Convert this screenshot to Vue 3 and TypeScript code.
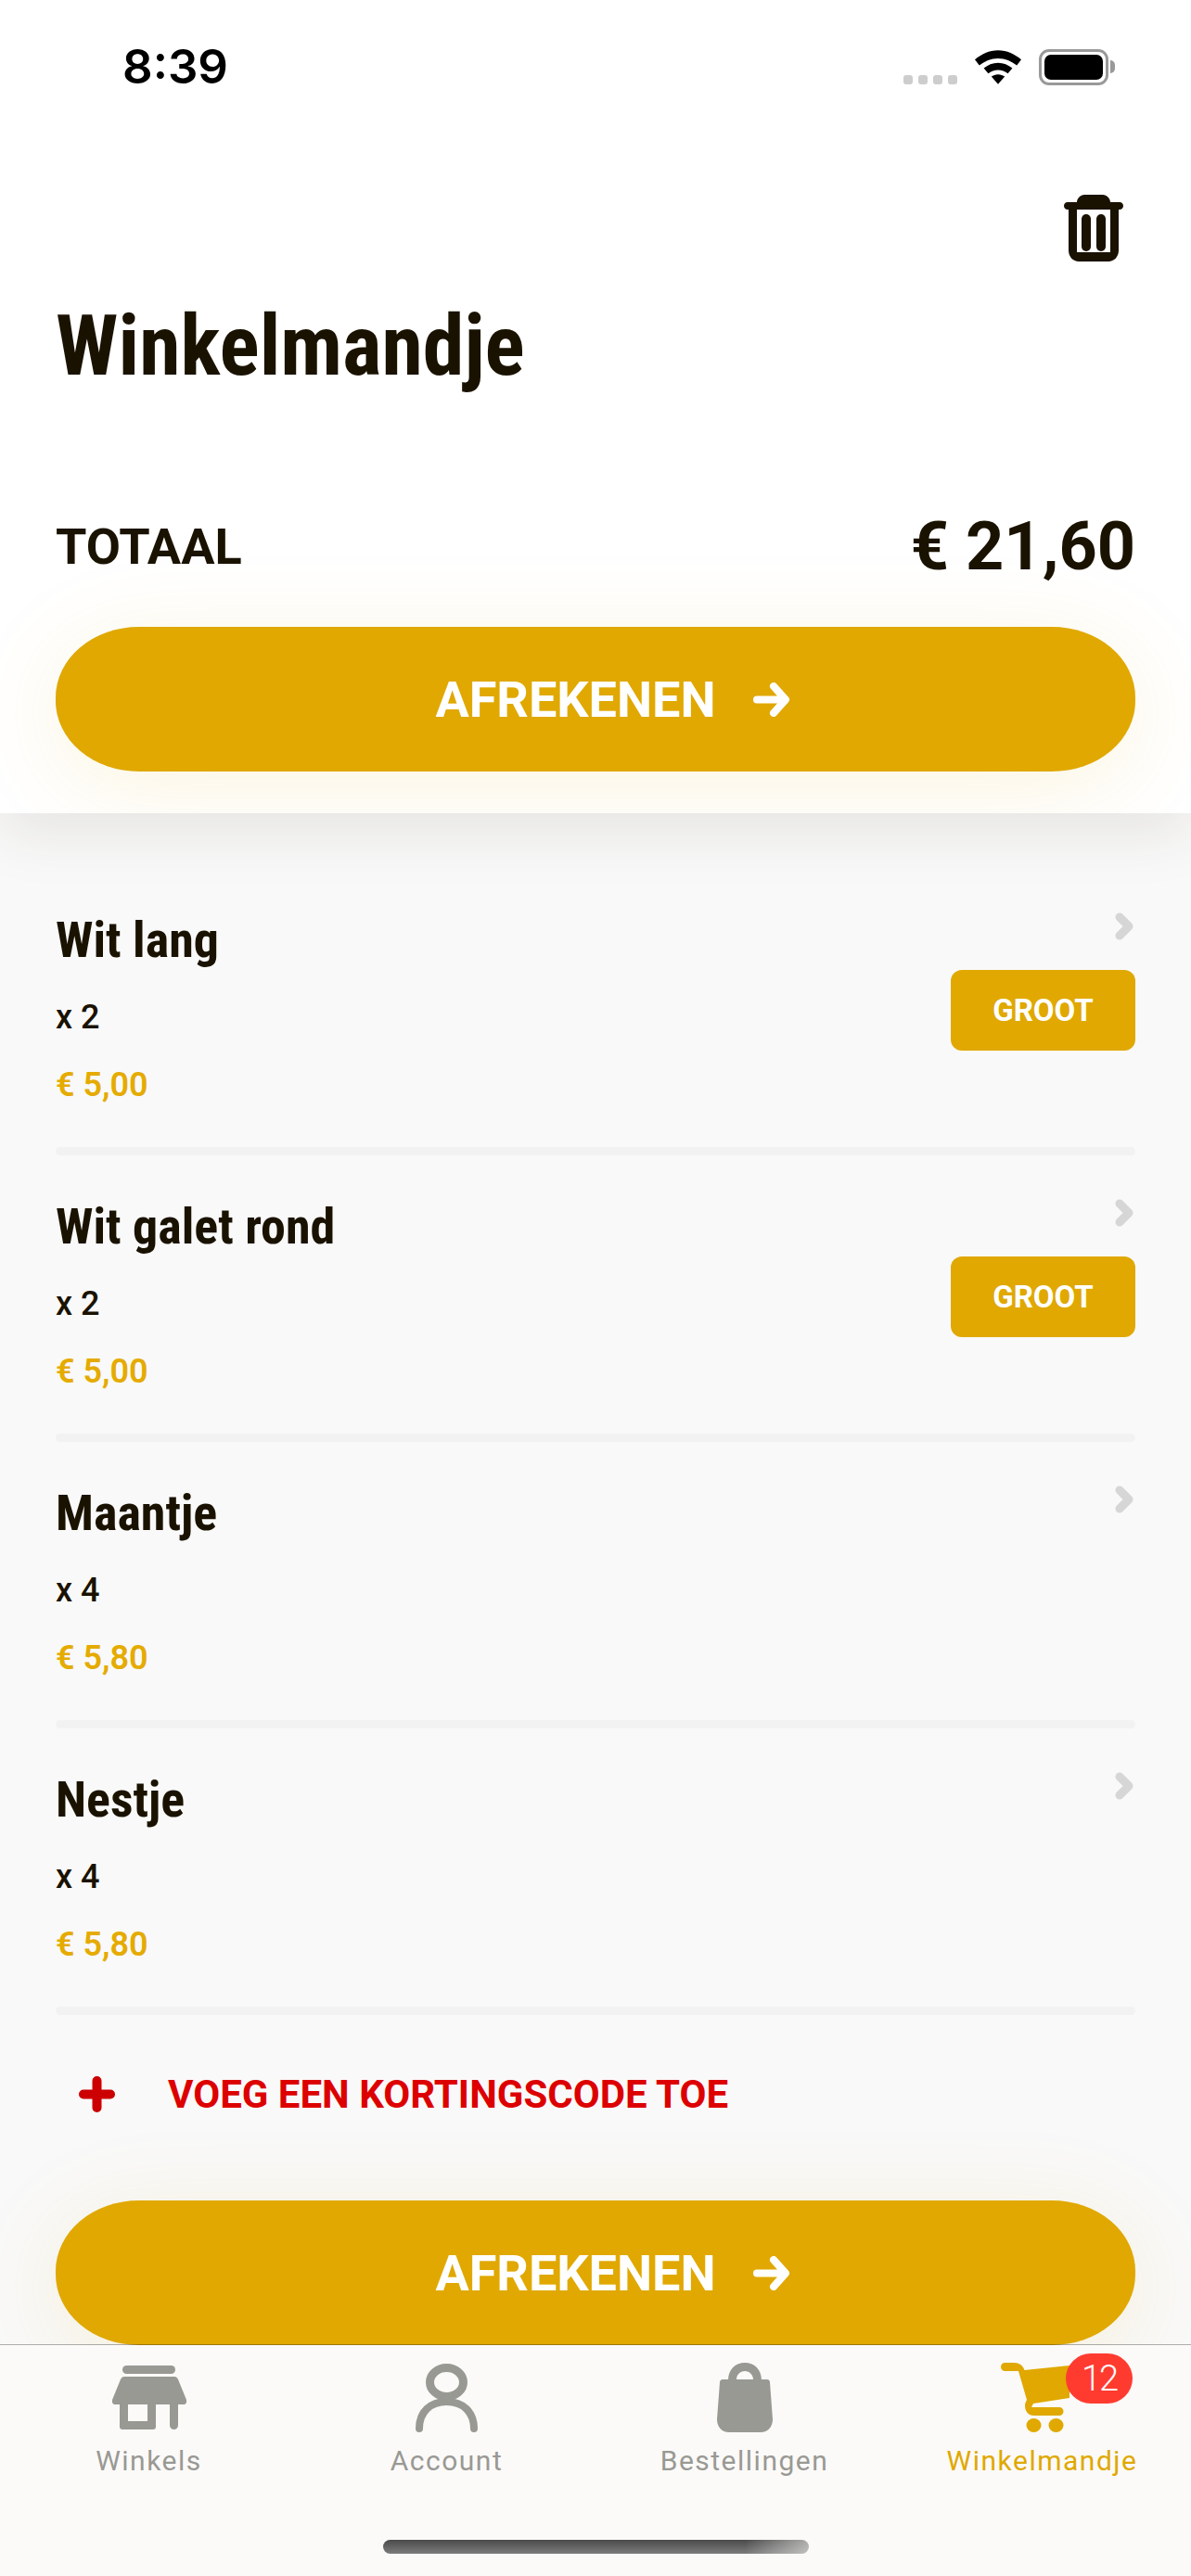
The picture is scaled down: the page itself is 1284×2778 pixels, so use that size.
<script setup lang="ts">
interface CartItem {
  name: string;
  qty: string;
  price: string;
  size?: string;
}

const items: CartItem[] = [
  { name: 'Wit lang', qty: 'x 2', price: '€ 5,00', size: 'GROOT' },
  { name: 'Wit galet rond', qty: 'x 2', price: '€ 5,00', size: 'GROOT' },
  { name: 'Maantje', qty: 'x 4', price: '€ 5,80' },
  { name: 'Nestje', qty: 'x 4', price: '€ 5,80' }
];
</script>

<template>
  <div class="screen">
    <header class="head">
      <div class="status">
        <span class="time">8:39</span>
        <div class="status-icons">
          <div class="signal"><i /><i /><i /><i /></div>
          <svg class="wifi" width="50" height="37" viewBox="0 0 52 38">
            <path d="M26 0C16 0 7.500 4 0 10.500L5 17C11 12 18 9 26 9s15 3 21 8l5-6.500C44.500 4 36 0 26 0z" fill="#000" />
            <path d="M26 14c-6 0-11.500 2.500-16 6l5 6c3-2.500 7-4 11-4s8 1.500 11 4l5-6c-4.500-3.500-10-6-16-6z" fill="#000" />
            <path d="M26 27c-3 0-5.500 1-7.500 2.500L26 38l7.500-8.500C31.500 28 29 27 26 27z" fill="#000" />
          </svg>
          <div class="battery"><div class="battery-fill" /><div class="battery-cap" /></div>
        </div>
      </div>
      <div class="trash-row">
        <svg width="64" height="72" viewBox="0 0 64 72" fill="#1a1200">
          <path d="M14 8c0-4 4-8 8-8h20c4 0 8 4 8 8h10c2.500 0 4 2 4 4s-1.500 4-4 4H4c-2.500 0-4-2-4-4s1.500-4 4-4z" />
          <path fill-rule="evenodd" d="M5 14h54v46c0 7-5 12-11 12H16C10 72 5 67 5 60zM14 16v46h36V16z" />
          <rect x="19" y="21" width="10" height="40" rx="5" />
          <rect x="35" y="21" width="10" height="40" rx="5" />
        </svg>
      </div>
      <h1 class="title">Winkelmandje</h1>
      <div class="total-row">
        <span class="total-label">TOTAAL</span>
        <span class="total-value">€ 21,60</span>
      </div>
      <button class="checkout checkout-top">
        <span>AFREKENEN</span>
        <svg width="41" height="37" viewBox="0 0 41 37" fill="none" stroke="#fff" stroke-width="8" stroke-linecap="round" stroke-linejoin="round">
          <path d="M4 18.500h30M22 4l13 14.500L22 33" />
        </svg>
      </button>
    </header>

    <main class="body">
      <template v-for="item in items" :key="item.name">
        <section class="item">
          <div class="item-main">
            <h2 class="item-name">{{ item.name }}</h2>
            <div class="item-qty">{{ item.qty }}</div>
            <div class="item-price">{{ item.price }}</div>
          </div>
          <div class="item-side">
            <svg class="chevron" width="20" height="30" viewBox="0 0 20 30" fill="none" stroke="#d6d6d6" stroke-width="9" stroke-linecap="round" stroke-linejoin="round">
              <path d="M5 5l10 10L5 25" />
            </svg>
            <span v-if="item.size" class="size">{{ item.size }}</span>
          </div>
        </section>
        <div class="rule" />
      </template>

      <div class="coupon">
        <svg width="39" height="39" viewBox="0 0 39 39" fill="none" stroke="#cc0000" stroke-width="10" stroke-linecap="round">
          <path d="M19.500 5v29M5 19.500h29" />
        </svg>
        <span>VOEG EEN KORTINGSCODE TOE</span>
      </div>

      <button class="checkout checkout-bottom">
        <span>AFREKENEN</span>
        <svg width="41" height="37" viewBox="0 0 41 37" fill="none" stroke="#fff" stroke-width="8" stroke-linecap="round" stroke-linejoin="round">
          <path d="M4 18.500h30M22 4l13 14.500L22 33" />
        </svg>
      </button>
    </main>

    <nav class="tabs">
      <div class="tab">
        <div class="tab-icon">
          <svg width="80" height="69" viewBox="0 0 80 69" fill="#999994">
            <rect x="11" y="0" width="57" height="9" rx="4.500" />
            <path d="M13 12h54c2 0 3 1 4 3l9 22c1 3-1 5-3 5H3c-2 0-4-2-3-5l9-22c1-2 2-3 4-3z" />
            <path fill-rule="evenodd" d="M8 42h39v24c0 2-1 3-3 3H11c-2 0-3-1-3-3zM17 42v18h21V42z" />
            <path d="M62 42h9v22.500a4.500 4.500 0 0 1-9 0z" />
          </svg>
        </div>
        <span>Winkels</span>
      </div>
      <div class="tab">
        <div class="tab-icon">
          <svg width="67" height="74" viewBox="0 0 67 74" fill="none" stroke="#999994" stroke-linecap="round">
            <ellipse cx="33.500" cy="20" rx="18" ry="15.500" stroke-width="9" />
            <path d="M4 70C4 52 16 41 33.500 41S63 52 63 70" stroke-width="8" />
          </svg>
        </div>
        <span>Account</span>
      </div>
      <div class="tab">
        <div class="tab-icon">
          <svg width="60" height="75" viewBox="0 0 60 75" fill="#999994">
            <path fill-rule="evenodd" d="M12 19C12 7 20 0 30 0s18 7 18 19zM21 18h18c0-5-4-9-9-9s-9 4-9 9z" />
            <path d="M6 18h48c2 0 3 1.500 3 3l3 40c0 8-5 14-13 14H13C5 75 0 69 0 61L3 21c0-1.500 1-3 3-3z" />
          </svg>
        </div>
        <span>Bestellingen</span>
      </div>
      <div class="tab tab-active">
        <div class="tab-icon cart-wrap">
          <svg width="82" height="75" viewBox="0 0 82 75" fill="#e0a800">
            <path d="M4.500 0H14c6 0 10 3 11.500 8L74 3v35l-39 6-2 4h30a4.500 4.500 0 0 1 0 9H36c-7 0-10-5-10-11 0-2 1-4 2-6L19 9H4.500a4.500 4.500 0 0 1 0-9z" />
            <ellipse cx="35.500" cy="67.500" rx="8" ry="7.500" />
            <ellipse cx="59.500" cy="67.500" rx="8" ry="7.500" />
          </svg>
          <span class="badge">12</span>
        </div>
        <span>Winkelmandje</span>
      </div>
    </nav>
    <div class="home-bar" />
  </div>
</template>

<style>
html, body {
  margin: 0;
  background: #f9f9f9;
}
</style>

<style scoped>
.screen {
  position: relative;
  width: 1284px;
  height: 2778px;
  overflow: hidden;
  background: #f9f9f9;
  font-family: Roboto, "Liberation Sans", sans-serif;
  color: #1a1200;
}

.head {
  position: relative;
  z-index: 1;
  box-sizing: border-box;
  height: 877px;
  padding: 0 60px;
  background: #fff;
  box-shadow: 0 20px 60px rgba(60, 50, 20, 0.1);
  overflow: hidden;
}

.status {
  display: flex;
  justify-content: space-between;
  align-items: flex-start;
  box-sizing: border-box;
  height: 210px;
  margin: 0 29px 0 72px;
  padding-top: 44px;
}

.time {
  font-family: Inter, Roboto, sans-serif;
  font-size: 51px;
  font-weight: 600;
  line-height: 56px;
  color: #000;
}

.status-icons {
  display: flex;
  align-items: flex-start;
  gap: 19px;
  padding-top: 9px;
}

.signal {
  display: flex;
  gap: 6px;
  padding-top: 28px;
}

.signal i {
  width: 10px;
  height: 10px;
  border-radius: 3px;
  background: #cdcdcd;
}

.wifi {
  margin-top: 1px;
}

.battery {
  position: relative;
  box-sizing: border-box;
  width: 75px;
  height: 39px;
  padding: 3px;
  border: 3px solid #999;
  border-radius: 11px;
}

.battery-fill {
  width: 100%;
  height: 100%;
  border-radius: 7px;
  background: #000;
}

.battery-cap {
  position: absolute;
  top: 9px;
  right: -10px;
  width: 5px;
  height: 14px;
  border-radius: 0 6px 6px 0;
  background: #999;
}

.trash-row {
  display: flex;
  justify-content: flex-end;
  margin-right: 13px;
}

.title {
  margin: 42px 0 0;
  font-stretch: condensed;
  font-size: 90px;
  font-weight: 700;
  line-height: 100px;
}

.total-row {
  display: flex;
  justify-content: space-between;
  align-items: center;
  height: 76px;
  margin-top: 127px;
}

.total-label {
  font-size: 54px;
  font-weight: 700;
}

.total-value {
  font-size: 72px;
  font-weight: 700;
}

.checkout {
  display: flex;
  justify-content: center;
  align-items: center;
  gap: 40px;
  box-sizing: border-box;
  width: 1164px;
  height: 156px;
  padding: 0 0 0 38px;
  border: 0;
  border-radius: 90px / 76px;
  background: #e0a800;
  color: #fff;
  font-family: Roboto, sans-serif;
  font-size: 54px;
  font-weight: 700;
  box-shadow: 0 16px 100px rgba(224, 168, 0, 0.13);
}

.checkout-top {
  margin-top: 49px;
}

.body {
  padding: 60px 60px 0;
}

.item {
  display: flex;
  justify-content: space-between;
  box-sizing: border-box;
  height: 300px;
  padding-top: 47px;
}

.rule {
  height: 9px;
  border-radius: 5px;
  background: #f2f2f2;
}

.item-name {
  margin: 0;
  font-stretch: condensed;
  font-size: 54px;
  font-weight: 700;
  line-height: 60px;
}

.item-qty {
  margin-top: 33px;
  font-size: 36px;
  font-weight: 500;
  line-height: 40px;
}

.item-price {
  margin-top: 33px;
  font-size: 36px;
  font-weight: 600;
  line-height: 40px;
  color: #e5ab00;
}

.item-side {
  display: flex;
  flex-direction: column;
  align-items: flex-end;
}

.chevron {
  margin: 0 2px 32px 0;
}

.size {
  display: flex;
  justify-content: center;
  align-items: center;
  width: 199px;
  height: 87px;
  border-radius: 12px;
  background: #e0a800;
  color: #fff;
  font-size: 33px;
  font-weight: 700;
}

.coupon {
  display: flex;
  align-items: center;
  gap: 57px;
  height: 84px;
  margin-top: 43px;
  padding-left: 25px;
  color: #dd0000;
  font-size: 42px;
  font-weight: 700;
}

.checkout-bottom {
  margin-top: 73px;
}

.tabs {
  position: absolute;
  z-index: 2;
  left: 0;
  right: 0;
  bottom: 0;
  display: grid;
  grid-template-columns: repeat(4, 1fr);
  box-sizing: border-box;
  height: 250px;
  padding-top: 19px;
  border-top: 1px solid rgba(0, 0, 0, 0.3);
  background: #fbfaf8;
  background-clip: padding-box;
}

.tab {
  display: flex;
  flex-direction: column;
  align-items: center;
  color: #999994;
  font-size: 30px;
  letter-spacing: 1.5px;
  line-height: 36px;
}

.tab-icon {
  display: flex;
  align-items: center;
  height: 75px;
  margin-bottom: 13px;
}

.tab-active {
  color: #e0a800;
}

.cart-wrap {
  position: relative;
  margin-right: 7px;
}

.badge {
  position: absolute;
  top: -10px;
  left: 70px;
  display: flex;
  justify-content: center;
  align-items: center;
  width: 72px;
  height: 54px;
  border-radius: 27px;
  background: #ff3b30;
  color: #fff;
  font-size: 38px;
  font-weight: 300;
  letter-spacing: -2px;
}

.home-bar {
  position: absolute;
  z-index: 3;
  left: 413px;
  bottom: 24px;
  width: 459px;
  height: 15px;
  border-radius: 8px;
  background:
    linear-gradient(90deg, rgba(251, 250, 248, 0) 85%, rgba(251, 250, 248, 0.55) 100%),
    linear-gradient(180deg, #4a4a4a, #7c7c7c);
}
</style>
